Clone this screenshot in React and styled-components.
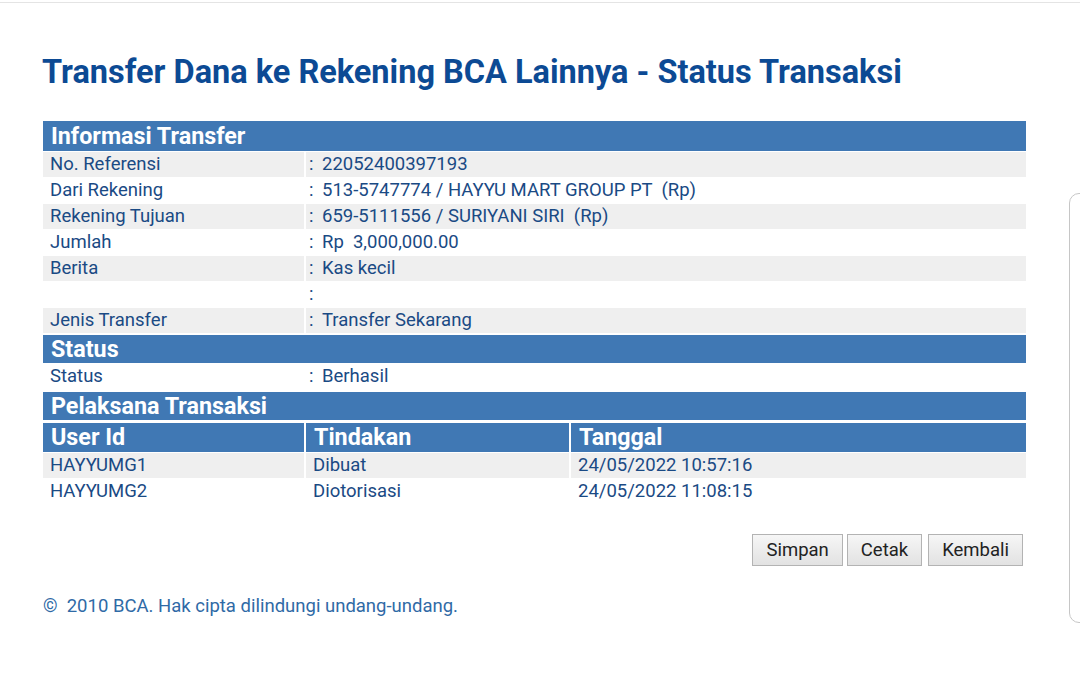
import styled, { createGlobalStyle } from "styled-components";

const GlobalStyle = createGlobalStyle`
  html, body {
    margin: 0;
    padding: 0;
    background: #ffffff;
  }
  body {
    font-family: Roboto, "Noto Sans", Arial, sans-serif;
    color: #1d4c85;
  }
`;

const info = [
  { label: "No. Referensi", value: "22052400397193" },
  { label: "Dari Rekening", value: "513-5747774 / HAYYU MART GROUP PT  (Rp)" },
  { label: "Rekening Tujuan", value: "659-5111556 / SURIYANI SIRI  (Rp)" },
  { label: "Jumlah", value: "Rp  3,000,000.00" },
  { label: "Berita", value: "Kas kecil" },
  { label: "", value: "" },
  { label: "Jenis Transfer", value: "Transfer Sekarang" },
];

const pelaksana = [
  { user: "HAYYUMG1", action: "Dibuat", date: "24/05/2022 10:57:16" },
  { user: "HAYYUMG2", action: "Diotorisasi", date: "24/05/2022 11:08:15" },
];

const App = () => {
  return (
    <>
      <GlobalStyle />
      <Page>
        <Title>Transfer Dana ke Rekening BCA Lainnya - Status Transaksi</Title>

        <Table>
          <colgroup>
            <col style={{ width: 261 }} />
            <col style={{ width: 263 }} />
            <col />
          </colgroup>
          <tbody>
            <tr>
              <HeadCell colSpan={3} $top={1} $h={30}>
                Informasi Transfer
              </HeadCell>
            </tr>
            {info.map((row, i) => (
              <tr key={i}>
                <Cell $shade={i % 2 === 0}>{row.label}</Cell>
                <Cell $shade={i % 2 === 0} colSpan={2}>
                  <Colon>:</Colon>
                  {row.value}
                </Cell>
              </tr>
            ))}
            <tr>
              <HeadCell colSpan={3} $top={1} $h={28}>
                Status
              </HeadCell>
            </tr>
            <tr>
              <Cell>Status</Cell>
              <Cell colSpan={2}>
                <Colon>:</Colon>
                Berhasil
              </Cell>
            </tr>
            <tr>
              <HeadCell colSpan={3} $top={2} $h={28}>
                Pelaksana Transaksi
              </HeadCell>
            </tr>
            <tr>
              <HeadCell $top={2} $h={29}>User Id</HeadCell>
              <HeadCell $top={2} $h={29}>Tindakan</HeadCell>
              <HeadCell $top={2} $h={29}>Tanggal</HeadCell>
            </tr>
            {pelaksana.map((row, i) => (
              <tr key={row.user}>
                <Cell $shade={i % 2 === 0}>{row.user}</Cell>
                <Cell $shade={i % 2 === 0}>{row.action}</Cell>
                <Cell $shade={i % 2 === 0}>{row.date}</Cell>
              </tr>
            ))}
          </tbody>
        </Table>

        <Actions>
          <Button>Simpan</Button>
          <Button>Cetak</Button>
          <Button>Kembali</Button>
        </Actions>

        <Footer>©&nbsp; 2010 BCA. Hak cipta dilindungi undang-undang.</Footer>
      </Page>
      <ScrollHandle />
    </>
  );
};

export default App;

const Page = styled.div`
  box-sizing: border-box;
  width: 1080px;
  min-height: 680px;
  border-top: 1px solid #e4e4e4;
  margin-top: 2px;
  padding: 48px 54px 40px 41px;
`;

const Title = styled.h1`
  margin: 0 0 26px 1px;
  font-size: 32.5px;
  line-height: 42px;
  font-weight: 700;
  color: #0c4a94;
`;

const Table = styled.table`
  width: 987px;
  table-layout: fixed;
  border-collapse: separate;
  border-spacing: 2px 1px;
  font-size: 18.5px;
`;

const HeadCell = styled.td`
  box-sizing: border-box;
  background: #4078b4;
  background-clip: padding-box;
  color: #ffffff;
  font-weight: 700;
  font-size: 23.3px;
  height: ${({ $h, $top }) => $h + $top}px;
  padding: 0 8px;
  line-height: ${({ $h }) => $h}px;
  white-space: nowrap;
  border-top: ${({ $top }) => $top}px solid #fff;
`;

const Cell = styled.td`
  background: ${({ $shade }) => ($shade ? "#efefef" : "#ffffff")};
  height: 25px;
  padding: 0 7px;
  line-height: 25px;
  white-space: pre;
  color: #1a4a84;
`;

const Colon = styled.span`
  display: inline-block;
  width: 13px;
  margin-left: -4px;
`;

const Actions = styled.div`
  display: flex;
  justify-content: flex-end;
  gap: 4px;
  margin-top: 29px;
  padding-right: 3px;
`;

const Button = styled.button`
  font-family: Roboto, Arial, sans-serif;
  font-size: 18.5px;
  color: #222;
  height: 32px;
  padding: 0 13px;
  background: linear-gradient(#f6f6f6, #e2e2e2);
  border: 1px solid #b3b3b3;
  border-radius: 0;
  &:nth-child(3) {
    margin-left: 2px;
  }
`;

const Footer = styled.p`
  margin: 29px 0 0 2px;
  font-size: 18.5px;
  color: #2f6aa6;
`;

const ScrollHandle = styled.div`
  position: fixed;
  top: 193px;
  left: 1069px;
  width: 30px;
  height: 428px;
  border: 1.5px solid #c6c6c6;
  border-radius: 10px;
  background: #fff;
`;
